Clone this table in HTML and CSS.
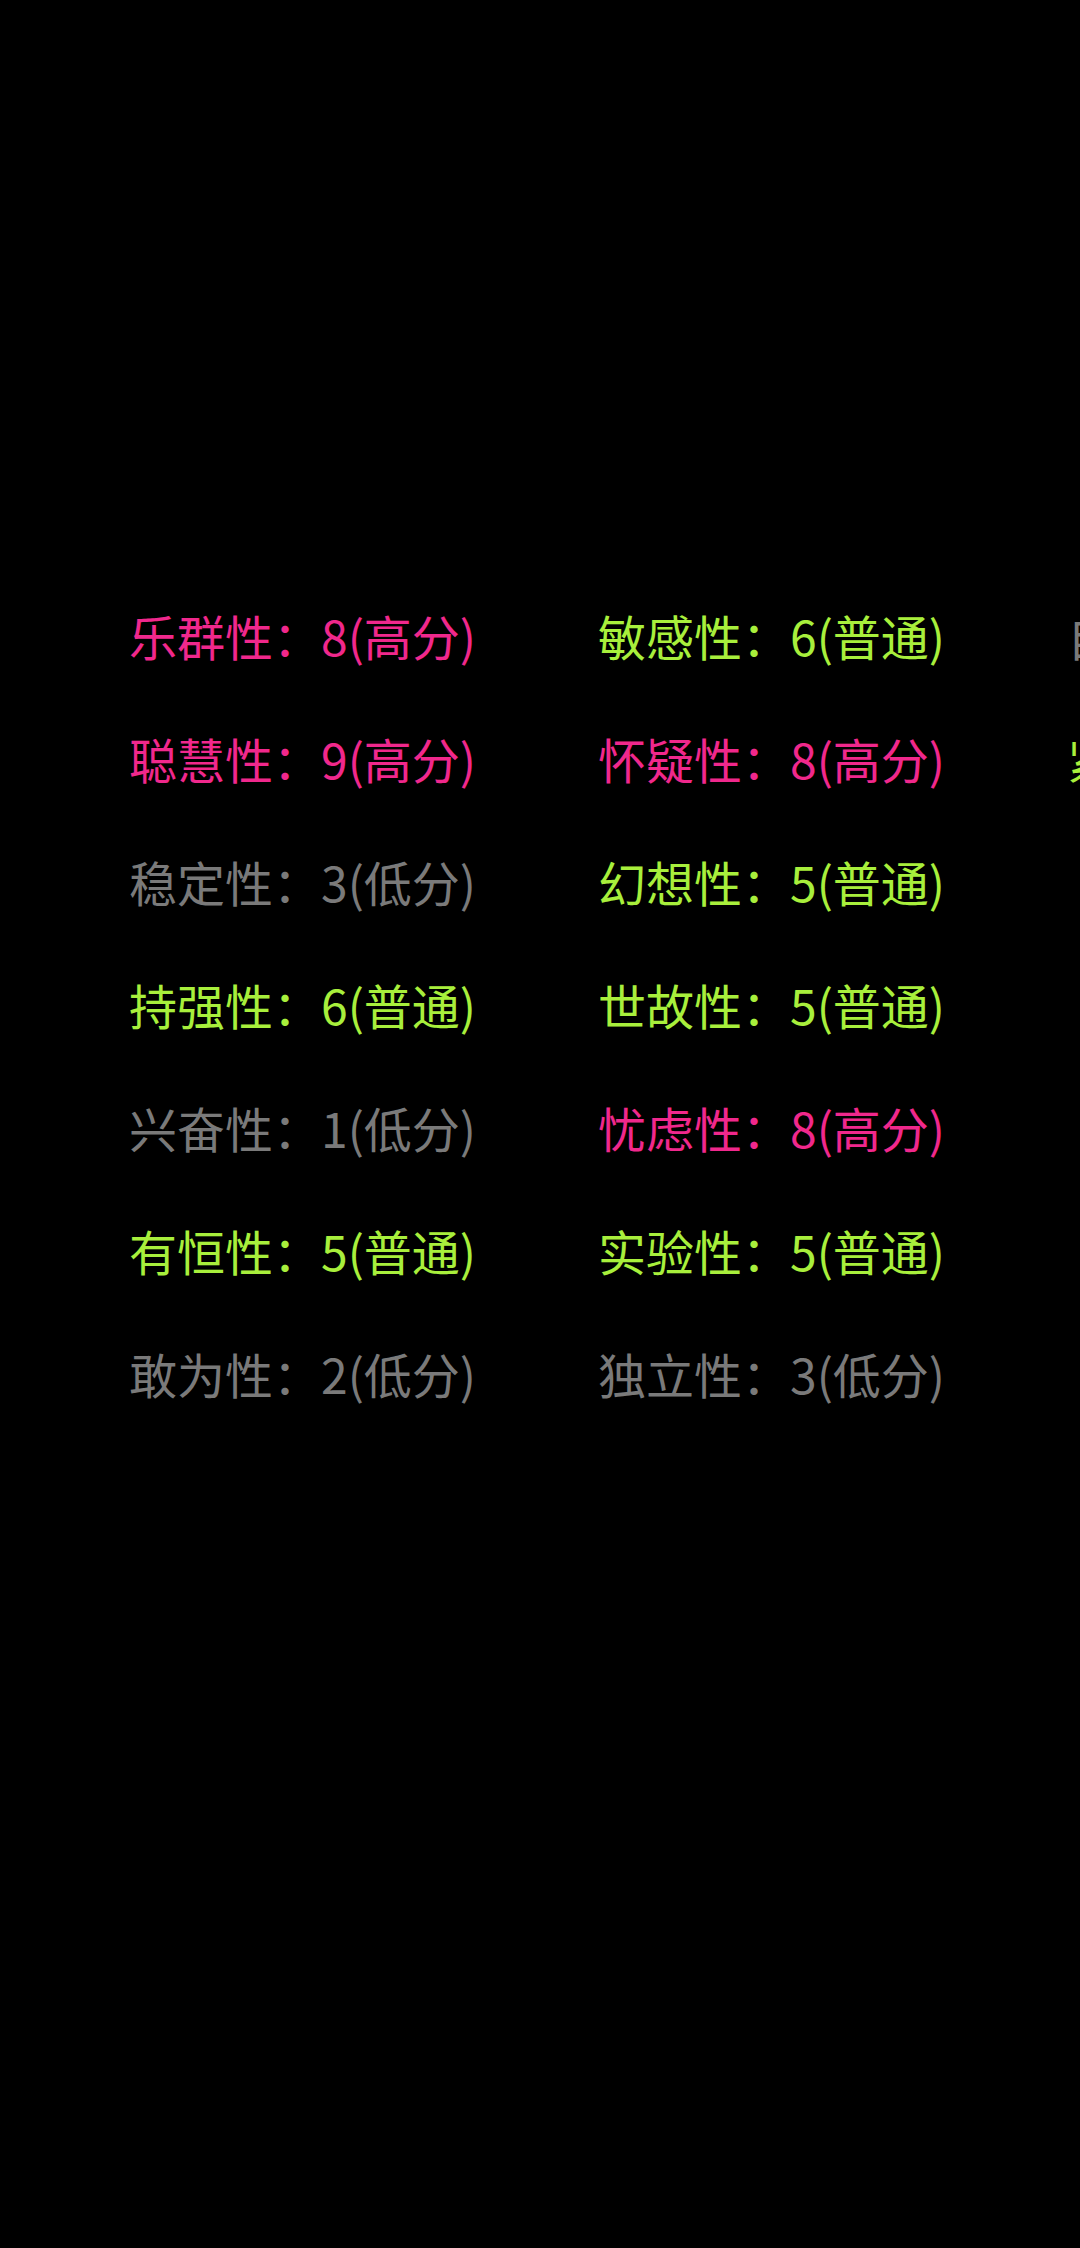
FILE: index.html
```html
<!DOCTYPE html>
<html lang="zh-CN">
<head>
<meta charset="utf-8">
<link rel="stylesheet" href="styles.css">
</head>
<body>
<div class="grid">
  <div class="col">
    <div class="item high">乐群性：8(高分)</div>
    <div class="item high">聪慧性：9(高分)</div>
    <div class="item low">稳定性：3(低分)</div>
    <div class="item mid">持强性：6(普通)</div>
    <div class="item low">兴奋性：1(低分)</div>
    <div class="item mid">有恒性：5(普通)</div>
    <div class="item low">敢为性：2(低分)</div>
  </div>
  <div class="col">
    <div class="item mid">敏感性：6(普通)</div>
    <div class="item high">怀疑性：8(高分)</div>
    <div class="item mid">幻想性：5(普通)</div>
    <div class="item mid">世故性：5(普通)</div>
    <div class="item high">忧虑性：8(高分)</div>
    <div class="item mid">实验性：5(普通)</div>
    <div class="item low">独立性：3(低分)</div>
  </div>
  <div class="col">
    <div class="item low">自律性：3(低分)</div>
    <div class="item mid">紧张性：6(普通)</div>
  </div>
</div>
</body>
</html>
```
FILE: styles.css
```css
html, body {
  margin: 0;
  padding: 0;
  background: #000;
  width: 1080px;
  height: 2248px;
  overflow: hidden;
}
.grid {
  display: flex;
  padding-top: 574px;
  padding-left: 129px;
  width: max-content;
}
.col {
  width: 469px;
  display: flex;
  flex-direction: column;
}
.item {
  font-family: "Noto Sans CJK SC", "Noto Sans", sans-serif;
  font-weight: 400;
  font-size: 48px;
  line-height: 123px;
  height: 123px;
  white-space: nowrap;
}
.high { color: #f0288c; }
.mid { color: #a8ef3c; }
.low { color: #7a7a7a; }
```
